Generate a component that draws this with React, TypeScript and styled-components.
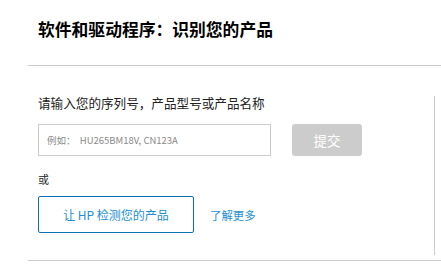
import React from "react";
import styled, { createGlobalStyle } from "styled-components";

const Global = createGlobalStyle`
  html, body { margin: 0; padding: 0; background: #fff; }
  body { font-family: "Noto Sans CJK SC", "Noto Sans", sans-serif; overflow: hidden; }
  * { box-sizing: border-box; }
`;

const Page = styled.div`
  width: 441px;
  padding-left: 28px;
`;

const Header = styled.header`
  height: 66px;
  padding: 17px 0 0 10px;
  border-bottom: 1px solid #cccccc;
`;

const Title = styled.h1`
  margin: 0;
  font-size: 16.8px;
  line-height: 24px;
  font-weight: 700;
  color: #000;
`;

const Body = styled.div`
  padding-bottom: 5px;
  border-bottom: 1px solid #cccccc;
`;

const Column = styled.section`
  width: 407px;
  margin-top: 30px;
  padding: 0 0 22px 10px;
  border-right: 1px solid #cccccc;
`;

const Label = styled.div`
  font-size: 12.6px;
  line-height: 14px;
  color: #222;
`;

const Row = styled.div<{ $top: number }>`
  display: flex;
  align-items: center;
  margin-top: ${(p) => p.$top}px;
`;

const Input = styled.input`
  width: 233px;
  height: 32px;
  border: 1px solid #cccccc;
  padding: 0 0 0 8px;
  font-family: "Noto Sans CJK SC", "Noto Sans", sans-serif;
  font-size: 9.5px;
  color: #333;
  outline: none;
  &::placeholder { color: #8a8a8a; }
`;

const Submit = styled.button`
  margin-left: 21px;
  width: 70px;
  height: 32px;
  border: none;
  border-radius: 3px;
  background: #cccccc;
  color: #fff;
  font-family: "Noto Sans CJK SC", "Noto Sans", sans-serif;
  font-size: 13.5px;
  padding: 0;
`;

const Or = styled.div`
  margin-top: 16px;
  font-size: 11px;
  line-height: 14px;
  color: #222;
`;

const Detect = styled.button`
  width: 156px;
  height: 37px;
  border: 1px solid #0a72b0;
  border-radius: 2px;
  background: #fff;
  color: #1c8fd4;
  font-family: "Noto Sans CJK SC", "Noto Sans", sans-serif;
  font-size: 12px;
  padding: 0;
`;

const More = styled.a`
  margin-left: 16px;
  color: #1c8fd4;
  font-size: 11.4px;
  text-decoration: none;
`;

export default function App() {
  return (
    <>
      <Global />
      <Page>
        <Header>
          <Title>软件和驱动程序：识别您的产品</Title>
        </Header>
        <Body>
          <Column>
            <Label>请输入您的序列号，产品型号或产品名称</Label>
            <Row $top={14}>
              <Input placeholder="例如：  HU265BM18V, CN123A" />
              <Submit>提交</Submit>
            </Row>
            <Or>或</Or>
            <Row $top={10}>
              <Detect>让 HP 检测您的产品</Detect>
              <More href="#">了解更多</More>
            </Row>
          </Column>
        </Body>
      </Page>
    </>
  );
}
